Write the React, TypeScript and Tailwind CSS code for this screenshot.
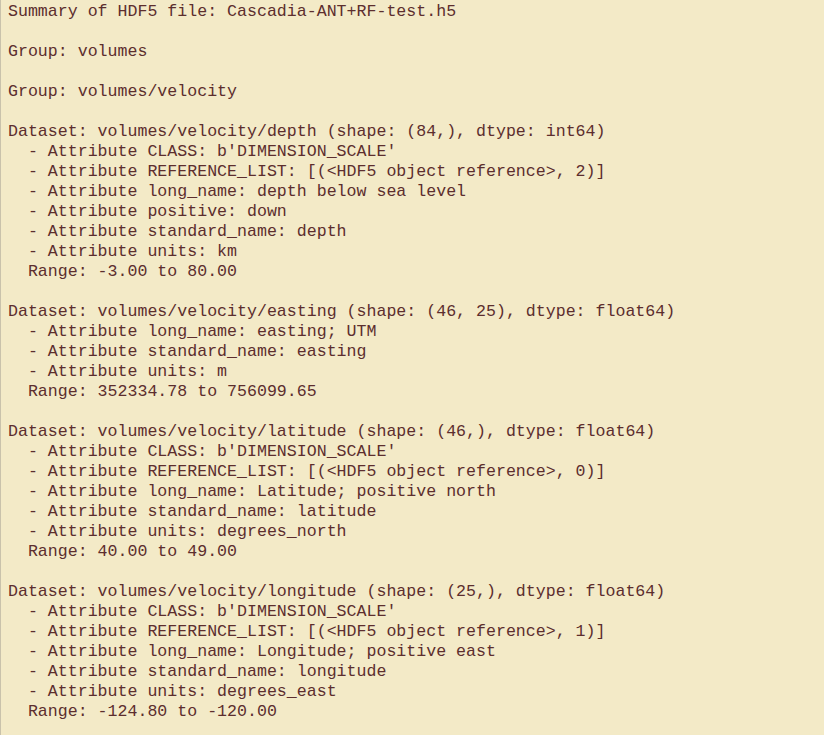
const lines = [
  "Summary of HDF5 file: Cascadia-ANT+RF-test.h5",
  "",
  "Group: volumes",
  "",
  "Group: volumes/velocity",
  "",
  "Dataset: volumes/velocity/depth (shape: (84,), dtype: int64)",
  "  - Attribute CLASS: b'DIMENSION_SCALE'",
  "  - Attribute REFERENCE_LIST: [(<HDF5 object reference>, 2)]",
  "  - Attribute long_name: depth below sea level",
  "  - Attribute positive: down",
  "  - Attribute standard_name: depth",
  "  - Attribute units: km",
  "  Range: -3.00 to 80.00",
  "",
  "Dataset: volumes/velocity/easting (shape: (46, 25), dtype: float64)",
  "  - Attribute long_name: easting; UTM",
  "  - Attribute standard_name: easting",
  "  - Attribute units: m",
  "  Range: 352334.78 to 756099.65",
  "",
  "Dataset: volumes/velocity/latitude (shape: (46,), dtype: float64)",
  "  - Attribute CLASS: b'DIMENSION_SCALE'",
  "  - Attribute REFERENCE_LIST: [(<HDF5 object reference>, 0)]",
  "  - Attribute long_name: Latitude; positive north",
  "  - Attribute standard_name: latitude",
  "  - Attribute units: degrees_north",
  "  Range: 40.00 to 49.00",
  "",
  "Dataset: volumes/velocity/longitude (shape: (25,), dtype: float64)",
  "  - Attribute CLASS: b'DIMENSION_SCALE'",
  "  - Attribute REFERENCE_LIST: [(<HDF5 object reference>, 1)]",
  "  - Attribute long_name: Longitude; positive east",
  "  - Attribute standard_name: longitude",
  "  - Attribute units: degrees_east",
  "  Range: -124.80 to -120.00",
]

export default function App() {
  return (
    <div className="min-h-[735px] w-[824px] bg-[#f3eac7] border-l border-[#c9c2ab]">
      <pre className="pl-[7px] pt-[2px] font-['Liberation_Mono',monospace] text-[16.6px] leading-[20px] text-[#5c2e2e]">
        {lines.join("\n")}
      </pre>
    </div>
  )
}
